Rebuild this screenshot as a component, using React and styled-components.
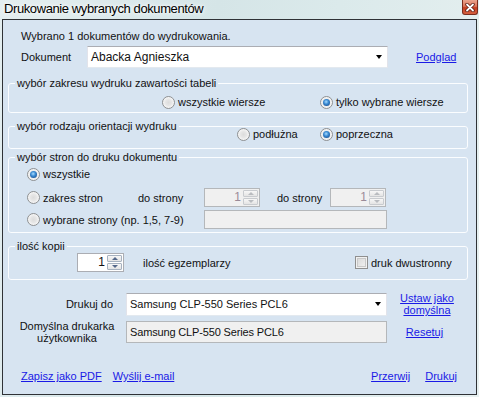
import React from "react";
import styled, { createGlobalStyle } from "styled-components";

const GlobalStyle = createGlobalStyle`
  html, body {
    margin: 0;
    padding: 0;
    overflow: hidden;
  }
  body {
    font-family: "Liberation Sans", Arial, sans-serif;
    font-size: 11px;
    color: #111;
  }
`;

const Window = styled.div`
  width: 479px;
  height: 397px;
  display: flex;
  flex-direction: column;
  box-sizing: border-box;
  background: linear-gradient(100deg, #e4eef0 0%, #d5e5e7 40%, #dbeaeb 62%, #e7f0f0 100%);
`;

const TitleBar = styled.div`
  height: 19px;
  display: flex;
  justify-content: space-between;
  align-items: flex-start;
  padding-left: 4px;
  flex: none;
`;

const Title = styled.span`
  font-size: 13px;
  letter-spacing: -0.4px;
  line-height: 18px;
  color: #000;
  text-shadow: 0 0 6px #fff, 0 0 3px #fff;
`;

const CloseButton = styled.div`
  width: 16px;
  height: 15px;
  margin-right: 1px;
  box-sizing: border-box;
  border: 1px solid #7a2c1c;
  border-top: none;
  border-radius: 0 0 3px 3px;
  background: linear-gradient(#eaa58f 0%, #dd7458 45%, #c43c1f 55%, #d4603f 100%);
  display: flex;
  align-items: center;
  justify-content: center;
`;

const Client = styled.div`
  flex: 1;
  margin: 0 2px 2px 2px;
  border: 1px solid #2f3236;
  background: #d7e4f1;
  display: flex;
  flex-direction: column;
  padding: 0 8px 0 5px;
`;

const InfoText = styled.div`
  margin: 9px 0 0 13px;
  line-height: 14px;
`;

const DocRow = styled.div`
  margin-top: 3px;
  height: 22px;
  display: flex;
  align-items: center;
  padding-left: 13px;
`;

const Label = styled.span`
  width: ${(p) => p.$w}px;
  flex: none;
  line-height: 14px;
  margin-left: ${(p) => p.$ml || 0}px;
`;

const Combo = styled.div`
  width: ${(p) => p.$w}px;
  height: ${(p) => p.$h || 22}px;
  box-sizing: border-box;
  background: #fff;
  border: 1px solid #e2e3ea;
  border-top-color: #abadb3;
  border-bottom-color: #e3e9ef;
  display: flex;
  align-items: center;
  justify-content: space-between;
  padding: 0 5px 0 3px;
  font-size: ${(p) => p.$fs || 11}px;
  flex: none;
`;

const Arrow = styled.span`
  width: 0;
  height: 0;
  border-left: 3.5px solid transparent;
  border-right: 3.5px solid transparent;
  border-top: 4px solid #000;
`;

const Link = styled.a`
  color: #1a1ae6;
  text-decoration: underline;
  cursor: pointer;
  line-height: ${(p) => p.$lh || 14}px;
  margin-left: ${(p) => p.$ml || 0}px;
  text-align: center;
  white-space: nowrap;
`;

const GroupBox = styled.fieldset`
  margin: ${(p) => p.$mt}px 0 0 0;
  padding: ${(p) => p.$pt || 0}px 0 ${(p) => p.$pb}px 0;
  border: 1px solid #fbfdff;
  border-radius: 3px;
  min-width: 0;
  flex: none;
`;

const Legend = styled.legend`
  margin-left: 6px;
  padding: 0 2px;
  line-height: 14px;
  font-size: 11px;
`;

const Row = styled.div`
  display: flex;
  align-items: center;
  height: ${(p) => p.$h || 14}px;
  padding-left: ${(p) => p.$pl || 0}px;
  margin-top: ${(p) => p.$mt || 0}px;
`;

const Option = styled.label`
  display: flex;
  align-items: center;
  gap: 3px;
  width: ${(p) => (p.$w ? `${p.$w}px` : "auto")};
  flex: none;
  line-height: 14px;
`;

const RadioDot = styled.span`
  width: 13px;
  height: 13px;
  box-sizing: border-box;
  border-radius: 50%;
  border: 1px solid #8e9092;
  background: radial-gradient(circle at 50% 50%, #dcdcdc 0, #e6e6e6 3px, #f6f6f6 5.5px);
  display: flex;
  align-items: center;
  justify-content: center;
  flex: none;
  &::after {
    content: "";
    width: 7px;
    height: 7px;
    border-radius: 50%;
    display: ${(p) => (p.$on ? "block" : "none")};
    background: radial-gradient(circle at 45% 40%, #a9dcff 0, #3b8bd3 40%, #0d3b7c 100%);
  }
`;

const CheckBox = styled.span`
  width: 13px;
  height: 13px;
  box-sizing: border-box;
  border: 1px solid #8f8f8f;
  background: linear-gradient(135deg, #d6d6d6, #f4f4f4);
  box-shadow: inset 0 0 0 1px #f1f1f1, inset 0 0 0 2px #c9c9c9;
  flex: none;
`;

const Spin = styled.div`
  width: ${(p) => p.$w}px;
  height: ${(p) => p.$h || 19}px;
  box-sizing: border-box;
  border: 1px solid ${(p) => (p.$off ? "#b4b7ba" : "#abadb3")};
  background: ${(p) => (p.$off ? "#f0f0f0" : "#fff")};
  display: flex;
  flex: none;
`;

const SpinValue = styled.span`
  flex: 1;
  text-align: right;
  padding-right: 2px;
  line-height: 16px;
  font-size: 12px;
  color: ${(p) => (p.$off ? "#9a8a98" : "#111")};
`;

const SpinButtons = styled.div`
  width: 15px;
  display: flex;
  flex-direction: column;
  gap: 1px;
  padding: 1px 1px 1px 0;
`;

const SpinBtn = styled.div`
  flex: 1;
  border: 1px solid ${(p) => (p.$off ? "#c8cbcf" : "#a7b2c0")};
  border-radius: 1px;
  background: linear-gradient(#f7f7f7, #e4e4e4);
  display: flex;
  align-items: center;
  justify-content: center;
  &::after {
    content: "";
    width: 0;
    height: 0;
    border-left: 3px solid transparent;
    border-right: 3px solid transparent;
    ${(p) => (p.$up ? "border-bottom" : "border-top")}: 3px solid
      ${(p) => (p.$off ? "#b9bcc0" : "#55688a")};
  }
`;

const Field = styled.div`
  width: ${(p) => p.$w}px;
  height: ${(p) => p.$h || 19}px;
  box-sizing: border-box;
  border: 1px solid #b4b7ba;
  background: #f0f0f0;
  display: flex;
  align-items: center;
  padding-left: 3px;
  font-size: ${(p) => p.$fs || 11}px;
  letter-spacing: -0.15px;
  flex: none;
`;

const PrinterGrid = styled.div`
  margin: 12px 0 0 13px;
  display: grid;
  grid-template-columns: 92px 261px 80px;
  column-gap: 13px;
  row-gap: 4px;
  align-items: center;
`;

const PrinterLabel = styled.div`
  line-height: 12px;
  white-space: nowrap;
  display: flex;
  flex-direction: column;
  align-items: ${(p) => (p.$align === "right" ? "flex-end" : "center")};
`;

const LinkCell = styled.div`
  display: flex;
  justify-content: center;
  margin-left: -13px;
  padding-right: ${(p) => p.$pr || 12}px;
`;

const Footer = styled.div`
  margin-top: auto;
  margin-bottom: 11px;
  display: flex;
  align-items: center;
  padding: 0 11px 0 13px;
  height: 14px;
`;

const FooterGroup = styled.div`
  display: flex;
  gap: ${(p) => p.$gap}px;
  margin-left: ${(p) => (p.$right ? "auto" : "0")};
`;

const Spinner = ({ w, value, off }) => (
  <Spin $w={w} $off={off}>
    <SpinValue $off={off}>{value}</SpinValue>
    <SpinButtons>
      <SpinBtn $up $off={off} />
      <SpinBtn $off={off} />
    </SpinButtons>
  </Spin>
);

const Radio = ({ w, on, children }) => (
  <Option $w={w}>
    <RadioDot $on={on} />
    <span>{children}</span>
  </Option>
);

export default function App() {
  return (
    <>
      <GlobalStyle />
      <Window>
        <TitleBar>
          <Title>Drukowanie wybranych dokumentów</Title>
          <CloseButton>
            <svg width="10" height="9" viewBox="0 0 10 9">
              <path d="M2 1.5 L8 7.5 M8 1.5 L2 7.5" stroke="#5a1a10" strokeWidth="3.4" strokeLinecap="round" />
              <path d="M2 1.5 L8 7.5 M8 1.5 L2 7.5" stroke="#fff" strokeWidth="1.8" strokeLinecap="round" />
            </svg>
          </CloseButton>
        </TitleBar>
        <Client>
          <InfoText>Wybrano 1 dokumentów do wydrukowania.</InfoText>
          <DocRow>
            <Label $w={66}>Dokument</Label>
            <Combo $w={301} $fs={12}>
              <span>Abacka Agnieszka</span>
              <Arrow />
            </Combo>
            <Link $ml={28}>Podglad</Link>
          </DocRow>

          <GroupBox $mt={8} $pt={5} $pb={3}>
            <Legend>wybór zakresu wydruku zawartości tabeli</Legend>
            <Row $pl={153}>
              <Radio w={158}>wszystkie wiersze</Radio>
              <Radio on>tylko wybrane wiersze</Radio>
            </Row>
          </GroupBox>

          <GroupBox $mt={6} $pb={7}>
            <Legend>wybór rodzaju orientacji wydruku</Legend>
            <Row $pl={228} $mt={-6}>
              <Radio w={83}>podłużna</Radio>
              <Radio on>poprzeczna</Radio>
            </Row>
          </GroupBox>

          <GroupBox $mt={1} $pt={3} $pb={3}>
            <Legend>wybór stron do druku dokumentu</Legend>
            <Row $pl={18}>
              <Radio on>wszystkie</Radio>
            </Row>
            <Row $pl={18} $h={19} $mt={7}>
              <Radio w={111}>zakres stron</Radio>
              <Label $w={66}>do strony</Label>
              <Spinner w={56} value="1" off />
              <Label $w={53} $ml={17}>do strony</Label>
              <Spinner w={56} value="1" off />
            </Row>
            <Row $pl={18} $h={19} $mt={3}>
              <Radio w={177}>wybrane strony (np. 1,5, 7-9)</Radio>
              <Field $w={183} />
            </Row>
          </GroupBox>

          <GroupBox $mt={6} $pb={7}>
            <Legend>ilość kopii</Legend>
            <Row $pl={68} $h={19}>
              <Spinner w={47} value="1" />
              <Label $w={212} $ml={19}>ilość egzemplarzy</Label>
              <Option>
                <CheckBox />
                <span>druk dwustronny</span>
              </Option>
            </Row>
          </GroupBox>

          <PrinterGrid>
            <PrinterLabel $align="right">Drukuj do</PrinterLabel>
            <Combo $w={261} $h={23}>
              <span>Samsung CLP-550 Series PCL6</span>
              <Arrow />
            </Combo>
            <LinkCell $pr={13}>
              <Link $lh={12}>
                Ustaw jako
                <br />
                domyślna
              </Link>
            </LinkCell>
            <PrinterLabel $align="center">
              <span>Domyślna drukarka</span>
              <span>użytkownika</span>
            </PrinterLabel>
            <Field $w={261} $h={22}>Samsung CLP-550 Series PCL6</Field>
            <LinkCell $pr={18}>
              <Link>Resetuj</Link>
            </LinkCell>
          </PrinterGrid>

          <Footer>
            <FooterGroup $gap={11}>
              <Link>Zapisz jako PDF</Link>
              <Link>Wyślij e-mail</Link>
            </FooterGroup>
            <FooterGroup $gap={15} $right>
              <Link>Przerwij</Link>
              <Link>Drukuj</Link>
            </FooterGroup>
          </Footer>
        </Client>
      </Window>
    </>
  );
}
